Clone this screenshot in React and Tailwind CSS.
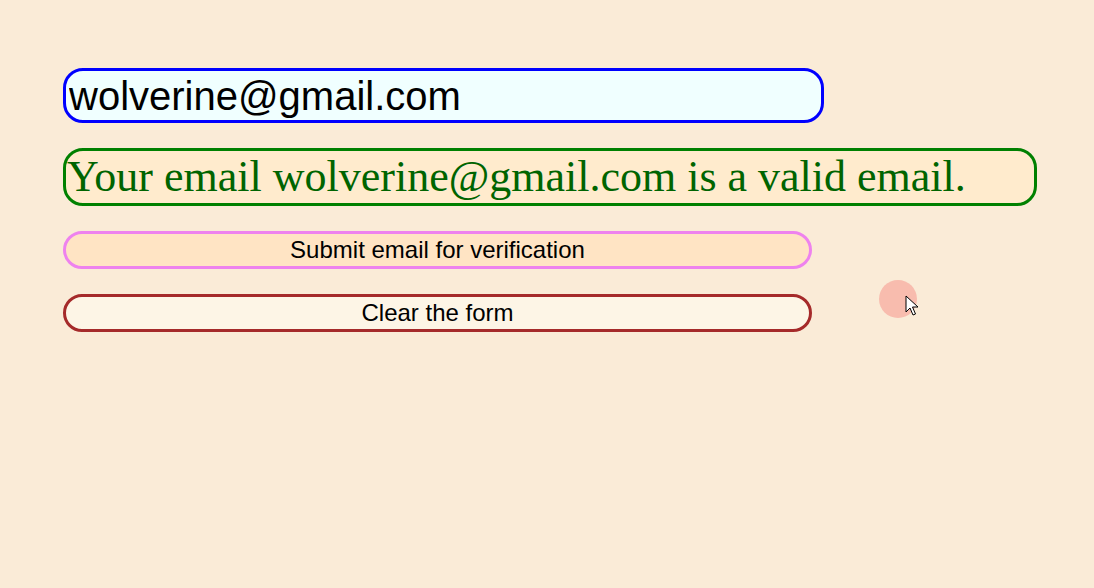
import { useState } from 'react';

const EmailForm = () => {
    const [email, setEmail] = useState('wolverine@gmail.com');

    return (
        <div className="min-h-screen w-full bg-[#faebd7] relative" style={{ fontFamily: '"Liberation Sans", Arial, sans-serif' }}>
            <div className="flex flex-col items-start pt-[68px] pl-[63px]">
                <input
                    type="text"
                    value={email}
                    onChange={(e) => setEmail(e.target.value)}
                    className="w-[761px] h-[55px] bg-[#f0ffff] border-[3px] border-[#0000ff] rounded-[20px] pl-[3px] text-[40px] text-black outline-none font-['Liberation_Sans',Arial,sans-serif]"
                />
                <div className="mt-[25px] w-[974px] h-[58px] flex items-center bg-[#ffebcd] border-[3px] border-[#008000] rounded-[20px] pl-[1px] text-[44px] leading-none text-[#006400] font-['Liberation_Serif','Times_New_Roman',serif] whitespace-nowrap">
                    Your email {email} is a valid email.
                </div>
                <button
                    type="button"
                    className="mt-[25px] w-[749px] h-[38px] bg-[#ffe4c4] border-[3px] border-[#ee82ee] rounded-[20px] text-[24px] leading-none text-black"
                >
                    Submit email for verification
                </button>
                <button
                    type="button"
                    onClick={() => setEmail('')}
                    className="mt-[25px] w-[749px] h-[38px] bg-[#fdf5e6] border-[3px] border-[#a52a2a] rounded-[20px] text-[24px] leading-none text-black"
                >
                    Clear the form
                </button>
            </div>

            {/* click highlight + pointer from the recording */}
            <div className="absolute left-[879px] top-[280px] w-[38px] h-[38px] rounded-full bg-[#f8bcae]" />
            <svg className="absolute left-[905px] top-[295px]" width="14" height="22" viewBox="0 0 14 22">
                <path d="M1 1 L1 17 L5 13 L8 20 L10.5 19 L7.5 12 L13 12 Z" fill="#fff" stroke="#000" strokeWidth="1" strokeLinejoin="round" />
            </svg>
        </div>
    );
};

export default function App() {
    return <EmailForm />;
}
